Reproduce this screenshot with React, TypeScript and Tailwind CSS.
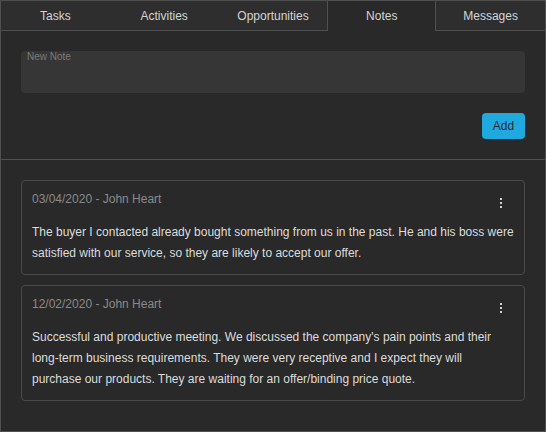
import React from "react";

const tabs = ["Tasks", "Activities", "Opportunities", "Notes", "Messages"];

const notes = [
  {
    date: "03/04/2020 - John Heart",
    text: "The buyer I contacted already bought something from us in the past. He and his boss were satisfied with our service, so they are likely to accept our offer.",
  },
  {
    date: "12/02/2020 - John Heart",
    text: "Successful and productive meeting. We discussed the company's pain points and their long-term business requirements. They were very receptive and I expect they will purchase our products. They are waiting for an offer/binding price quote.",
  },
];

function Dots() {
  return (
    <svg width="4" height="12" viewBox="0 0 4 12" className="block">
      <rect x="1" y="1" width="2" height="2" fill="#d0d0d0" />
      <rect x="1" y="5" width="2" height="2" fill="#d0d0d0" />
      <rect x="1" y="9" width="2" height="2" fill="#d0d0d0" />
    </svg>
  );
}

export default function App() {
  return (
    <div
      className="w-[546px] h-[432px] bg-[#292929] border border-[#4f4f4f] flex flex-col overflow-hidden"
      style={{ fontFamily: '"Liberation Sans", Arial, sans-serif' }}
    >
      <div className="grid grid-cols-5 h-[30px] shrink-0">
        {tabs.map((t) => {
          const active = t === "Notes";
          return (
            <div
              key={t}
              className={
                active
                  ? "flex items-center justify-center text-[12px] text-[#d4d4d4] bg-[#292929] border-l border-r border-[#4f4f4f]"
                  : "flex items-center justify-center text-[12px] text-[#d4d4d4] bg-[#2e2e2e] border-b border-[#4f4f4f]"
              }
            >
              {t}
            </div>
          );
        })}
      </div>
      <div className="px-[20px] pt-[20px] pb-[20px] flex flex-col">
        <div className="relative h-[42px] bg-[#363636] rounded-[4px]">
          <span className="absolute left-[6px] top-[0px] text-[10px] leading-[12px] text-[#7a7a7a]">
            New Note
          </span>
        </div>
        <div className="flex justify-end mt-[20px]">
          <button className="h-[26px] w-[43px] rounded-[4px] bg-[#1fa9df] text-[12px] text-[#2b2b2b] flex items-center justify-center">
            Add
          </button>
        </div>
      </div>
      <div className="h-px bg-[#4f4f4f] shrink-0" />
      <div className="px-[20px] pt-[20px] flex flex-col gap-[10px]">
        {notes.map((n) => (
          <div
            key={n.date}
            className="border border-[#4a4a4a] rounded-[4px] p-[10px]"
          >
            <div className="flex justify-between items-start h-[24px]">
              <span className="text-[12px] leading-[16px] text-[#8a8a8a]">
                {n.date}
              </span>
              <div className="w-[24px] h-[24px] flex items-center justify-center mr-[1px]">
                <Dots />
              </div>
            </div>
            <p className="mt-[7px] text-[12px] leading-[21px] text-[#dcdcdc]">
              {n.text}
            </p>
          </div>
        ))}
      </div>
    </div>
  );
}
